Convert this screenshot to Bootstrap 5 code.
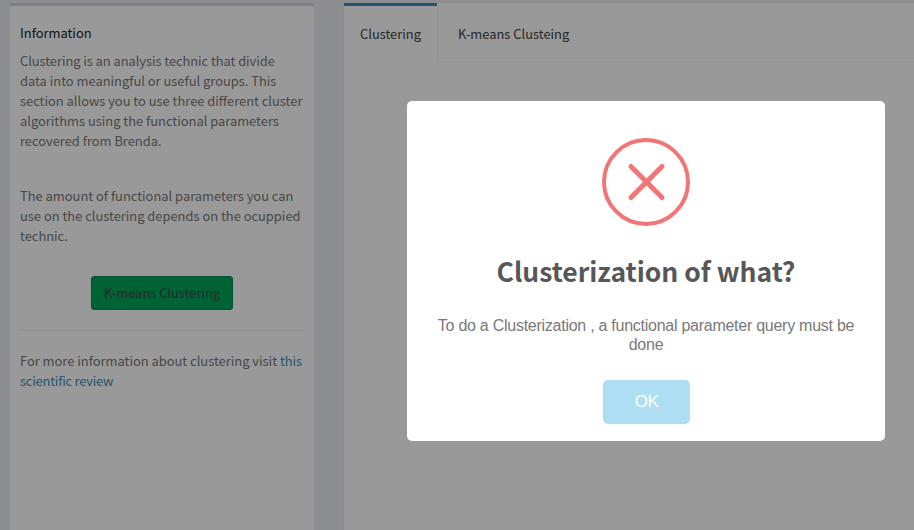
<!DOCTYPE html>
<html lang="en">
<head>
<meta charset="utf-8">
<meta name="viewport" content="width=device-width, initial-scale=1">
<title>Clustering</title>
<link rel="stylesheet" href="https://cdn.jsdelivr.net/npm/bootstrap@5.3.0/dist/css/bootstrap.min.css">
<style>
body{height:530px;background:#ecedf3;font:12.9px/20px "Noto Sans CJK SC","Noto Sans",sans-serif;color:#777}
.page{height:530px;padding:3px 0 0 10px;gap:30px}
.info-box{width:304px;border-top:3px solid #d2d3dc;border-radius:3px 3px 0 0;padding:17px 10px 0;box-shadow:0 1px 1px rgba(0,0,0,.1);white-space:nowrap}
.info-title{color:#222}
.info-text{margin-bottom:35px}
.first-line{letter-spacing:-.05px}
.review-line{letter-spacing:-.2px}
.btn-cluster{width:142px;height:34px;padding:0;font-size:inherit;line-height:20px;border-radius:3px;--bs-btn-bg:#00a65a;--bs-btn-border-color:#008d4c;--bs-btn-color:#444}
.button-row{margin-top:30px}
.rule{margin:20px 0;border-color:#eee;opacity:1}
.page a.review{color:#3c8dbc}
.tab-panel{box-shadow:0 1px 1px rgba(0,0,0,.1)}
.tab-strip{height:59px;--bs-nav-tabs-border-color:#f4f4f4;--bs-nav-tabs-border-radius:0;--bs-nav-tabs-border-width:1px}
.tab-strip .nav-link{height:59px;padding:18px 21px 0;color:#444;line-height:20px;border:0;border-top:3px solid transparent}
.tab-strip .nav-link.active{width:93px;padding:18px 0 0 16px;color:#444;border-top-color:#3c8dbc;box-shadow:1px 3px 0 #f4f4f4;clip-path:inset(0 -1px 0 0)}
.shade{background:rgba(0,0,0,.4)}
.alert-window{left:407px;top:101px;width:478px;height:340px;padding:37px 17px 17px;border-radius:5px}
.alert-title{margin:25px 0 0;font-size:26.5px;line-height:40px;font-weight:600;color:#575757;white-space:nowrap}
.alert-copy{margin:25px 0 0;font:16px/19px "Liberation Sans",Arial,sans-serif;letter-spacing:-.26px;color:#797979;white-space:nowrap}
.btn-ok{width:87px;height:44px;margin-top:26px;padding:0 0 0 1px;border:0;border-radius:5px;font:17px/44px "Liberation Sans",Arial,sans-serif;letter-spacing:-.5px;--bs-btn-bg:#aedef4;--bs-btn-color:#fff}
</style>
<script src="https://cdn.jsdelivr.net/npm/bootstrap@5.3.0/dist/js/bootstrap.bundle.min.js"></script>
</head>
<body class="overflow-hidden">
<main class="page d-flex">
  <aside class="info-box bg-white flex-shrink-0">
    <div class="info-title mb-2">Information</div>
    <p class="info-text"><span class="first-line">Clustering is an analysis technic that divide</span><br>data into meaningful or useful groups. This<br>section allows you to use three different cluster<br>algorithms using the functional parameters<br>recovered from Brenda.</p>
    <p class="mb-0">The amount of functional parameters you can<br>use on the clustering depends on the ocuppied<br>technic.</p>
    <div class="button-row d-flex justify-content-center"><button class="btn btn-cluster" type="button">K-means Clustering</button></div>
    <hr class="rule">
    <p class="mb-0">For more information about clustering visit <a class="review text-decoration-none" href="#">this<br><span class="review-line">scientific review</span></a></p>
  </aside>
  <section class="tab-panel bg-white flex-grow-1">
    <ul class="nav nav-tabs tab-strip flex-nowrap">
      <li class="nav-item"><a class="nav-link active" href="#">Clustering</a></li>
      <li class="nav-item"><a class="nav-link" href="#">K-means Clusteing</a></li>
    </ul>
  </section>
</main>
<div class="shade position-fixed top-0 start-0 w-100 h-100">
  <div class="alert-window bg-white position-absolute text-center" role="dialog" aria-labelledby="alert-title">
    <svg class="d-block mx-auto" width="88" height="88" viewBox="0 0 88 88" fill="none" stroke="#f27474" aria-hidden="true"><circle cx="44" cy="44" r="42" stroke-width="4"/><path d="M29 28.500 60 59.500M60 28.500 29 59.500" stroke-width="5" stroke-linecap="round"/></svg>
    <h2 class="alert-title" id="alert-title">Clusterization of what?</h2>
    <p class="alert-copy">To do a Clusterization , a functional parameter query must be<br>done</p>
    <button class="btn btn-ok" type="button">OK</button>
  </div>
</div>
</body>
</html>
